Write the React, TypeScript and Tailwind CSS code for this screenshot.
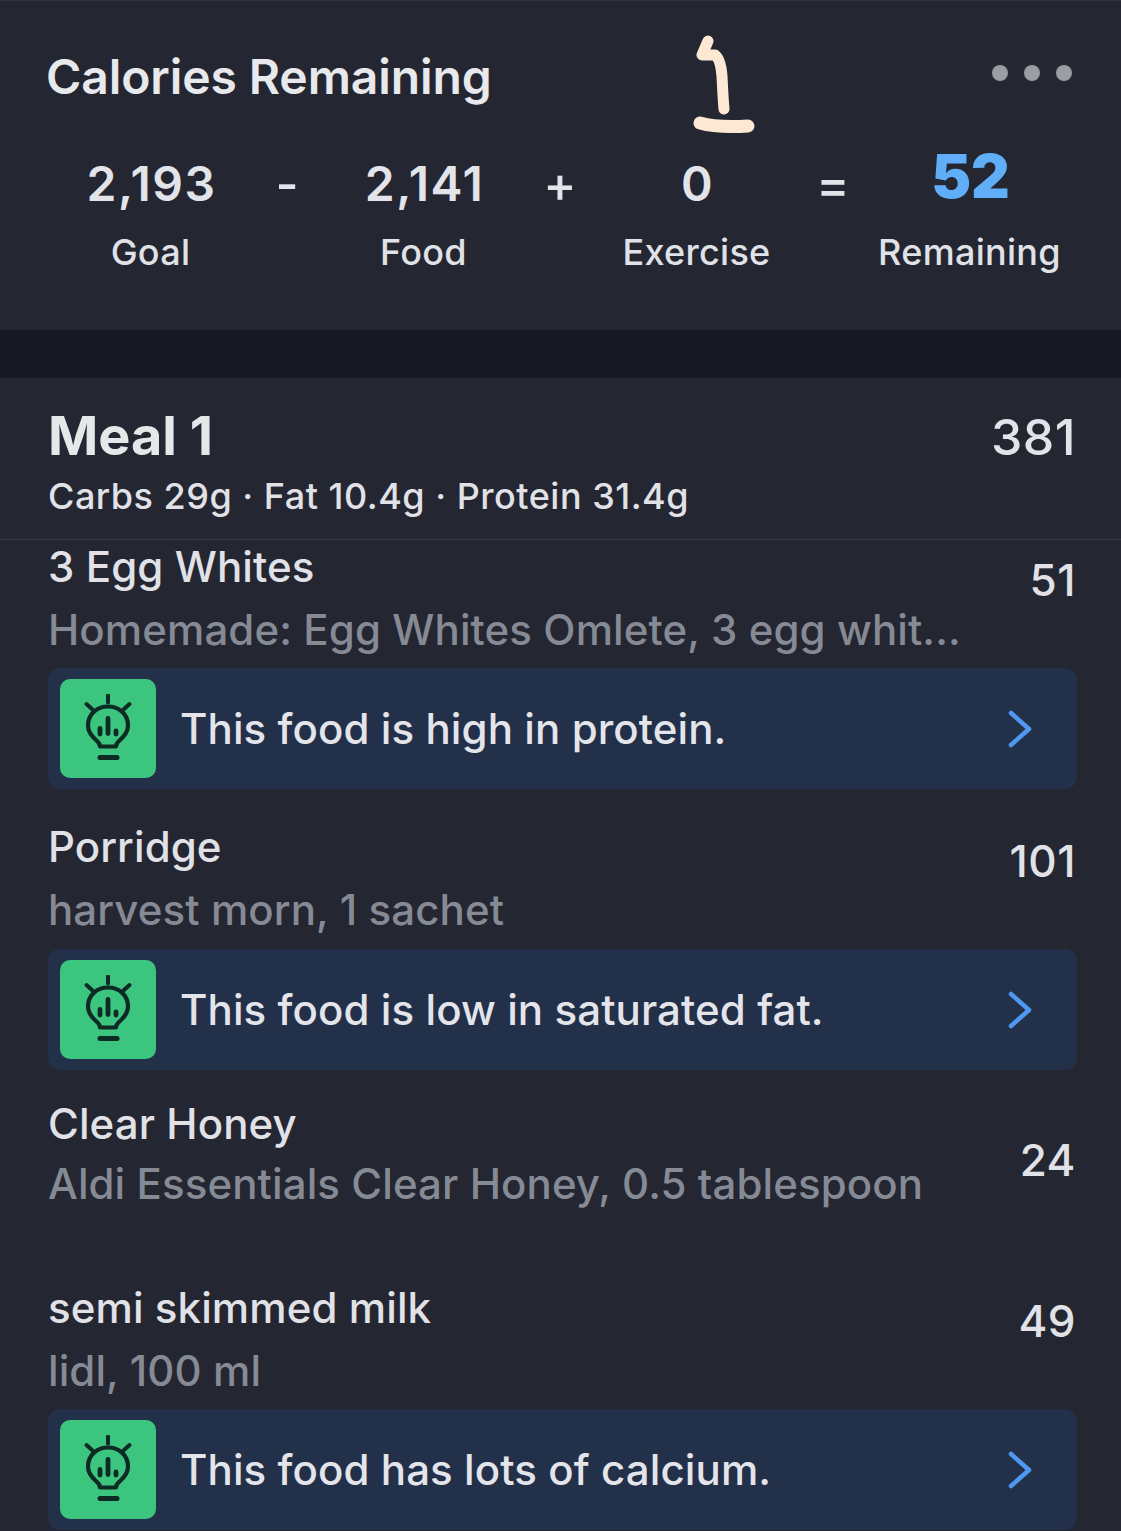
const font = { fontFamily: 'Inter, "Noto Sans", sans-serif' };

function Bulb() {
  return (
    <svg width="50" height="70" viewBox="0 1.5 50 70" fill="none" stroke="#0e2a24" strokeLinecap="round" strokeLinejoin="round">
      <path d="M25 3v7M3.500 11.500l5.500 5M46.500 11.500l-5.500 5" strokeWidth="4" />
      <path d="M25 14C13.500 14 5 22 5 33c0 7 4 11 8 14.500 3 2.500 4 4.500 4 6.500h16c0-2 1-4 4-6.500 4-3.500 8-7.500 8-14.500C45 22 36.500 14 25 14Z" strokeWidth="4.200" />
      <path d="M25 26v15M17 36v5.500M33 38.500v3" strokeWidth="4.800" />
      <path d="M17 65h17" strokeWidth="5" />
    </svg>
  );
}

function Tip({ text }: { text: string }) {
  return (
    <div className="mr-[44px] ml-12 flex h-[121px] items-center rounded-xl bg-[#233049] pr-[44px] pl-3">
      <div className="flex h-[99px] w-24 shrink-0 items-center justify-center rounded-[10px] bg-[#3cc57e]">
        <Bulb />
      </div>
      <span className="ml-6 flex-1 text-[42px] font-medium tracking-[0.1px] text-[#e3e5ea]">{text}</span>
      <svg width="26" height="38" viewBox="0 0 26 38" fill="none" stroke="#4f97f0" strokeWidth="4.500" strokeLinecap="round" strokeLinejoin="round">
        <path d="M4 3l18 16L4 35" />
      </svg>
    </div>
  );
}

function Food({ name, sub, cals, h, calPt, subGap }: { name: string; sub: string; cals: string; h: string; calPt: string; subGap: string }) {
  return (
    <div className={`flex justify-between pr-[45px] pl-12 ${h}`}>
      <div>
        <div className="text-[42px] leading-[50px] font-medium tracking-[0.1px] text-[#e0e2e7]">{name}</div>
        <div className={`text-[42px] leading-[50px] font-medium tracking-[0.1px] text-[#868a94] ${subGap}`}>{sub}</div>
      </div>
      <div className={`text-[44px] leading-[50px] font-medium tracking-[0.5px] text-[#e0e2e7] ${calPt}`}>{cals}</div>
    </div>
  );
}

export default function App() {
  return (
    <div style={font} className="relative h-[1531px] w-[1121px] overflow-hidden bg-[#242632]">
      <section className="h-[330px] border-t border-[#30333f]">
        <div className="flex items-start justify-between pt-[45px] pr-[49px] pl-[46px]">
          <h1 className="text-[48px] leading-[62px] font-semibold tracking-[-0.1px] text-[#e8e9ec]">Calories Remaining</h1>
          <div className="mt-[19px] flex gap-4">
            <span className="h-4 w-4 rounded-full bg-[#9b9da5]" />
            <span className="h-4 w-4 rounded-full bg-[#9b9da5]" />
            <span className="h-4 w-4 rounded-full bg-[#9b9da5]" />
          </div>
        </div>
        <div className="mt-[45px] flex pl-[14px] text-center">
          {[
            ["2,193", "Goal", "-"],
            ["2,141", "Food", "+"],
            ["0", "Exercise", "="],
          ].map(([v, l, op]) => (
            <div key={l} className="relative w-[273px]">
              <div className="h-[62px] pl-[2px] text-[48px] leading-[62px] font-semibold tracking-[1.500px] text-[#e2e4e9]">{v}</div>
              <div className="mt-[12px] text-[36px] leading-[50px] font-medium tracking-[0.3px] text-[#e0e2e7]">{l}</div>
              <span className="absolute top-0 left-[273px] -translate-x-1/2 text-[50px] leading-[62px] font-medium text-[#e2e4e9]">{op}</span>
            </div>
          ))}
          <div className="w-[273px]">
            <div className="-mt-[12px] h-[70px] pl-[2px] text-[60px] leading-[70px] font-black text-[#60aef8]">52</div>
            <div className="mt-[16px] text-[36px] leading-[50px] font-medium tracking-[0.3px] text-[#e0e2e7]">Remaining</div>
          </div>
        </div>
      </section>

      <svg className="absolute top-[34px] left-[690px]" width="68" height="102" viewBox="0 0 68 102" fill="none" stroke="#fde9d3" strokeLinecap="round" strokeLinejoin="round">
        <path d="M18 7l-6 14h13c4 3 6 9 7 21 .6 12 1 22 2 33" strokeWidth="11" />
        <path d="M10 89c14 4 32 4 48 3" strokeWidth="13" />
      </svg>

      <div className="h-12 bg-[#161824]" />

      <section className="flex h-[162px] items-start justify-between border-b border-[#393c47] pt-[28px] pr-[45px] pl-12">
        <div>
          <div className="text-[54px] leading-[60px] font-bold text-[#e6e7e9]">Meal 1</div>
          <div className="mt-[5px] text-[36px] leading-[50px] font-medium tracking-[0.5px] text-[#e0e2e7]">Carbs 29g · Fat 10.4g · Protein 31.4g</div>
        </div>
        <div className="pt-px text-[50px] leading-[60px] font-medium tracking-[0.5px] text-[#e2e4e9]">381</div>
      </section>

      <div>
        <Food name="3 Egg Whites" sub="Homemade: Egg Whites Omlete, 3 egg whit..." cals="51" h="h-[128px] pt-[2px]" calPt="pt-[13px]" subGap="mt-[13px]" />
        <Tip text="This food is high in protein." />
        <div className="h-[33px]" />
        <Food name="Porridge" sub="harvest morn, 1 sachet" cals="101" h="h-[127px]" calPt="pt-[14px]" subGap="mt-[13px]" />
        <Tip text="This food is low in saturated fat." />
        <div className="h-[29px]" />
        <Food name="Clear Honey" sub="Aldi Essentials Clear Honey, 0.5 tablespoon" cals="24" h="h-[184px]" calPt="pt-[36px]" subGap="mt-[10px]" />
        <Food name="semi skimmed milk" sub="lidl, 100 ml" cals="49" h="h-[126px]" calPt="pt-[13px]" subGap="mt-[13px]" />
        <Tip text="This food has lots of calcium." />
      </div>
    </div>
  );
}
